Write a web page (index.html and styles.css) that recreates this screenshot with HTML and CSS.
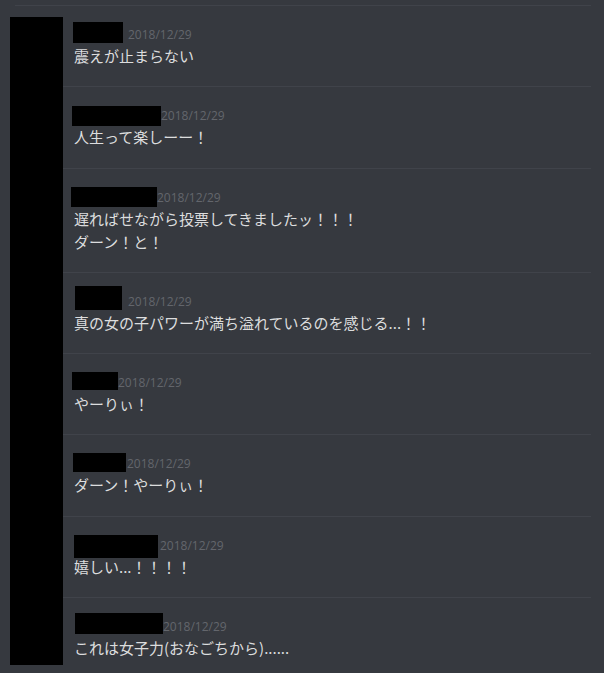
FILE: index.html
```html
<!DOCTYPE html>
<html>
<head>
	<title>Messages</title>
	<link rel="stylesheet" href="styles.css">
</head>
<body>
	<div class="top-line"></div>
	<div class="chat">
		<div class="avatar"></div>
		<div class="messages">
			<div class="message">
				<div class="header">
					<span class="name" style="width:50px;height:21px;margin-top:0;margin-left:-1px"></span>
					<span class="time" style="margin-left:5px">2018/12/29</span>
				</div>
				<div class="text">震えが止まらない</div>
			</div>
			<div class="message">
				<div class="header">
					<span class="name" style="width:89px;height:20px;margin-top:3px;margin-left:-2px"></span>
					<span class="time">2018/12/29</span>
				</div>
				<div class="text">人生って楽しーー！</div>
			</div>
			<div class="message">
				<div class="header">
					<span class="name" style="width:86px;height:20px;margin-top:2px;margin-left:-3px"></span>
					<span class="time">2018/12/29</span>
				</div>
				<div class="text">遅ればせながら投票してきましたッ！！！<br>ダーン！と！</div>
			</div>
			<div class="message">
				<div class="header">
					<span class="name" style="width:47px;height:24px;margin-top:-3px;margin-left:1px"></span>
					<span class="time" style="margin-left:6px">2018/12/29</span>
				</div>
				<div class="text">真の女の子パワーが満ち溢れているのを感じる...！！</div>
			</div>
			<div class="message">
				<div class="header">
					<span class="name" style="width:46px;height:18px;margin-top:2px;margin-left:-2px"></span>
					<span class="time">2018/12/29</span>
				</div>
				<div class="text">やーりぃ！</div>
			</div>
			<div class="message">
				<div class="header">
					<span class="name" style="width:53px;height:19px;margin-top:2px;margin-left:-1px"></span>
					<span class="time" style="margin-left:1px">2018/12/29</span>
				</div>
				<div class="text">ダーン！やーりぃ！</div>
			</div>
			<div class="message">
				<div class="header">
					<span class="name" style="width:84px;height:23px;margin-top:2px;margin-left:0"></span>
					<span class="time" style="margin-left:2px">2018/12/29</span>
				</div>
				<div class="text">嬉しい...！！！！</div>
			</div>
			<div class="message">
				<div class="header">
					<span class="name" style="width:88px;height:21px;margin-top:-1px;margin-left:1px"></span>
					<span class="time">2018/12/29</span>
				</div>
				<div class="text">これは女子力(おなごちから)......</div>
			</div>
		</div>
	</div>
</body>
</html>
```
FILE: styles.css
```css
/* Page */
body {
	margin: 0;
	background-color: #36393f;
	font-family: "Noto Sans CJK JP", "Open Sans", sans-serif;
	overflow: hidden;
}
.top-line {
	height: 1px;
	margin: 5px 13px 0 15px;
	background-color: #40434a;
}
/* Chat layout */
.chat {
	display: flex;
}
.avatar {
	flex: none;
	width: 53px;
	height: 648px;
	margin: 11px 0 0 10px;
	background-color: #000;
}
.messages {
	flex: 1;
	margin-right: 13px;
}
/* Message rows */
.message {
	padding: 16px 0 19.3px 11px;
	border-top: 1px solid #40434a;
}
.message:first-child {
	border-top: none;
}
.header {
	display: flex;
	align-items: flex-start;
	height: 22px;
}
.name {
	flex: none;
	display: block;
	background-color: #000;
}
.time {
	margin-top: 5px;
	font-family: "Open Sans", sans-serif;
	font-size: 12px;
	line-height: 16px;
	color: #63666c;
}
.text {
	font-size: 15px;
	line-height: 23px;
	color: #dcddde;
}
```
